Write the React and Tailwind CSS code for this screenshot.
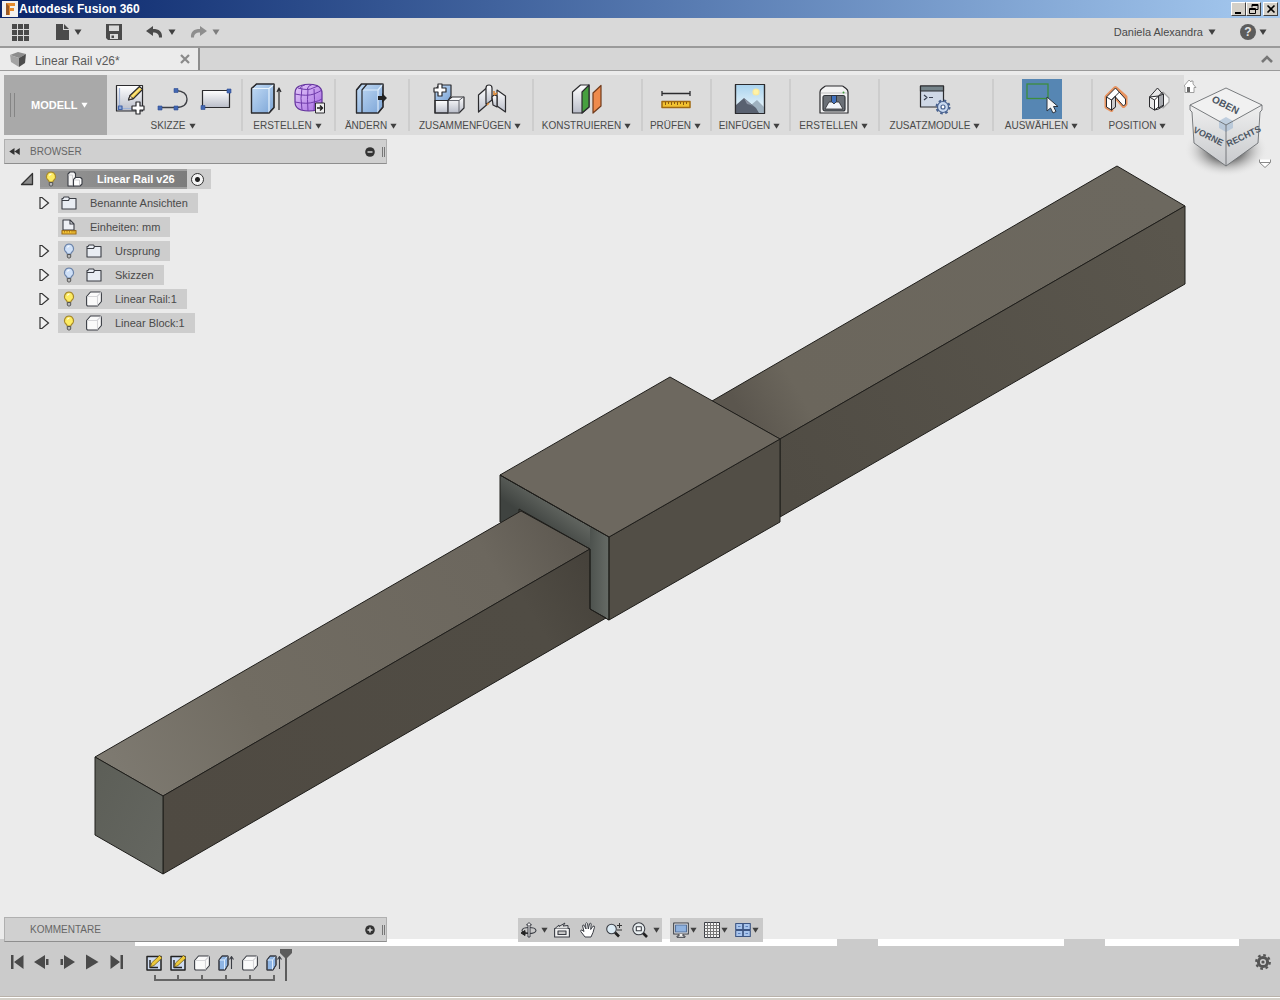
import React, { useState } from 'react';

const Caret = ({ className = 'w-2 h-[6px] text-[#404040]' }) => (
    <svg viewBox="0 0 8 6" className={className} fill="currentColor">
        <path d="M0.5 0.5h7L4 6z" />
    </svg>
);

/* ---------- ribbon icons, all on a 32px grid ---------- */

const Big = ({ children }) => (
    <svg viewBox="0 0 32 32" className="w-8 h-8 shrink-0" fill="none" stroke="#2b2b2e" strokeWidth="1.2" strokeLinejoin="round">
        <defs>
            <linearGradient id="steel" x1="0" y1="0" x2="0" y2="1">
                <stop offset="0" stopColor="#ffffff" />
                <stop offset="1" stopColor="#b9bdc9" />
            </linearGradient>
            <linearGradient id="azure" x1="0" y1="0" x2="1" y2="1">
                <stop offset="0" stopColor="#c3dcf6" />
                <stop offset="1" stopColor="#7ba4d6" />
            </linearGradient>
            <linearGradient id="violet" x1="0" y1="0" x2="1" y2="1">
                <stop offset="0" stopColor="#e6cdfb" />
                <stop offset="1" stopColor="#a468e0" />
            </linearGradient>
            <linearGradient id="sky" x1="0" y1="0" x2="0" y2="1">
                <stop offset="0" stopColor="#a9d3ee" />
                <stop offset="1" stopColor="#f2fafd" />
            </linearGradient>
        </defs>
        {children}
    </svg>
);

const SketchIcon = () => (
    <Big>
        <rect x="2.5" y="2.5" width="26" height="25.5" fill="url(#steel)" />
        <path d="M5.5 5v20.5H20" stroke="#9fb3d8" />
        <rect x="4.5" y="23" width="3.500" height="3.500" fill="#8fa9d8" stroke="#3f62a8" />
        <path d="M14.5 17l1.500-4.500 9.500-9 3 3-9.500 9.500z" fill="#f5d24c" />
        <path d="M14.5 17l1.500-4.500 3 3z" fill="#f6e3c0" strokeWidth="1" />
        <path d="M17.500 14l9-9" stroke="#fff3b5" strokeWidth="1" />
        <path d="M22 19h4v4h4v4h-4v4h-4v-4h-4v-4h4z" fill="#fff" />
    </Big>
);

const LineIcon = () => (
    <Big>
        <path d="M3 24.500h16c7 0 11-3 11-8.500S26 8 19 7.500" stroke="#3d3f44" strokeWidth="1.300" />
        <g fill="#4267b2" stroke="#2f4f94" strokeWidth=".6">
            <rect x="1" y="23" width="4" height="4" />
            <rect x="17" y="23" width="4" height="4" />
            <rect x="17" y="5.500" width="4" height="4" />
        </g>
    </Big>
);

const RectIcon = () => (
    <Big>
        <rect x="2.5" y="7.5" width="27" height="17" fill="url(#steel)" />
        <g fill="#4267b2" stroke="#2f4f94" strokeWidth=".6">
            <rect x="1" y="22.5" width="4" height="4" />
            <rect x="27" y="6" width="4" height="4" />
        </g>
    </Big>
);

const ExtrudeIcon = () => (
    <Big>
        <path d="M1.5 5.500l5-4.500H24v23.500L19 30H1.500z" fill="url(#azure)" />
        <path d="M2 5.500h17l5-4M19 5.500V30" stroke="#e8f3fd" />
        <path d="M1.5 5.500l5-4.500H24v23.500L19 30H1.500z" />
        <path d="M29 27V6m-2 3l2-4 2 4" />
    </Big>
);

const FormIcon = () => (
    <Big>
        <path d="M8 2.500Q16 0 24 2.500Q29 5 29 10v10q0 5-5 7Q16 29 8 27q-6-2-6-8V10Q2 4 8 2.500z" fill="url(#violet)" stroke="#60319a" />
        <path d="M2 11q12 2.500 19 0 5-2 8-4M2 19q12 2.500 19 0 5-1 8-3M5 5q10 3 15 0l5-2M9 4.500Q7 15 9 27M15 6q-1 10 0 22M21 6q1 10 0 22M12 1.800q-5 1.500-5 4M19 1.500q-4 1-5 5" stroke="#6f3bab" strokeWidth="1" />
        <rect x="22.5" y="20" width="9" height="10" fill="#efefef" strokeWidth="1" />
        <path d="M24 25h5m-2-2.500l2.500 2.500L27 27.500" stroke="#222" strokeWidth="1.500" />
    </Big>
);

const ModifyIcon = () => (
    <Big>
        <path d="M1.5 7l5-6H28v23l-5 6H1.500z" fill="url(#azure)" />
        <path d="M7 7h16l5-6M23 7v23" stroke="#dcecfb" />
        <path d="M1.5 7l5-6H28v23l-5 6H1.500zM7 30V7l5-6" />
        <path d="M23 13h4v-3l5 5-5 5v-3h-4z" fill="#222" stroke="none" />
    </Big>
);

const AssembleIcon = () => (
    <Big>
        <path d="M2 17.500h13V30H2z" fill="url(#steel)" />
        <path d="M15 17l4-3h12v11l-5 5H15z" fill="url(#steel)" />
        <path d="M15 17.500h11l5-4M26 17.500V30M15 17.500V30" stroke="#63656c" strokeWidth="1" />
        <path d="M2 7l4-5h12v11l-3 4.500H2z" fill="url(#azure)" />
        <path d="M2 17.500V30h13" />
        <path d="M5 1h4v4h4v4H9v4H5V9H1V5h4z" fill="#fff" />
    </Big>
);

const JointIcon = () => (
    <Big>
        <path d="M2.5 12l8-7v17l-8 7z" fill="url(#steel)" />
        <path d="M10 5q0-3 3-3t3 3v12l-4 3-2 1z" fill="url(#steel)" />
        <path d="M21 7l8.500 6v16L21 23z" fill="url(#steel)" />
        <path d="M16 14q2-3 5-1v11l-4-2z" fill="url(#steel)" />
        <path d="M11 22l2-2M18 8v4M18 12l3-2" stroke="#dc8a3a" strokeWidth="1.600" />
    </Big>
);

const ConstructIcon = () => (
    <Big>
        <path d="M1.5 9l8-7H18v22l-7 6H1.500z" fill="url(#steel)" />
        <path d="M11 9l7-7v22l-7 6z" fill="#47a03f" />
        <path d="M22 10l8-7.500V23l-8 7z" fill="#ee8a4c" stroke="#713b1c" />
    </Big>
);

const MeasureIcon = () => (
    <Big>
        <path d="M2 10.500h28M2 8v5M30 8v5" strokeWidth="1.300" />
        <rect x="2" y="18.5" width="28" height="6" fill="#f2c230" stroke="#a06a12" strokeWidth="1.500" />
        <path d="M5.5 19v3M8.500 19v2M11.500 19v3M14.500 19v2M17.500 19v3M20.500 19v2M23.500 19v3M26.500 19v2" stroke="#8a5a10" strokeWidth="1" />
    </Big>
);

const InsertIcon = () => (
    <Big>
        <rect x="1.5" y="1.5" width="29" height="29" fill="url(#sky)" />
        <circle cx="22" cy="9" r="3" fill="#fff3a8" stroke="#fbe89b" />
        <path d="M12 26l11-9 7 7v6H12z" fill="#9fb1bf" stroke="none" />
        <path d="M2 22l8-7 12 10 3 5H2z" fill="#596170" stroke="none" />
        <path d="M10 15l3 6 4 1 3 2-10-9z" fill="#8a93a2" stroke="none" />
        <rect x="1.5" y="1.5" width="29" height="29" />
    </Big>
);

const PrintIcon = () => (
    <Big>
        <path d="M2 9Q2 7 4 5.500L6 4q1-1 2-1h16q1 0 2 1l2 1.500Q30 7 30 9v21H2z" fill="#f3f3f3" />
        <path d="M3 10h26" stroke="#c9c9c9" />
        <rect x="5" y="12.5" width="22" height="15.5" rx="2" fill="#6b7077" stroke="#33363b" />
        <path d="M7 26l4-7h10l4 7z" fill="#f2f5f9" strokeWidth=".8" />
        <path d="M13.5 12.500h5v6L16 21l-2.500-2.500z" fill="#3f70bd" strokeWidth=".8" />
        <circle cx="25.5" cy="9.5" r="1" fill="#3f9b3b" stroke="none" />
    </Big>
);

const AddinIcon = () => (
    <Big>
        <rect x="1.5" y="3" width="23" height="21" fill="#cfd8e6" />
        <rect x="1.5" y="3" width="23" height="5" fill="#75848a" />
        <path d="M5 12l3 2.500L5 17M10 14.500h4" stroke="#3b4252" strokeWidth="1.200" />
        <circle cx="24" cy="24" r="5.5" fill="#c9d9f0" stroke="#49628f" />
        <circle cx="24" cy="24" r="6.5" stroke="#49628f" strokeWidth="2" strokeDasharray="2.550 2.550" />
        <circle cx="24" cy="24" r="2" fill="#fff" stroke="#49628f" />
    </Big>
);

const SelectIcon = () => (
    <span className="w-10 h-10 bg-[#5686b3] flex items-center justify-center">
        <svg viewBox="0 0 40 40" className="w-10 h-10" fill="none">
            <rect x="5" y="5" width="21" height="14.5" stroke="#3d8d3e" strokeWidth="1.300" />
            <path d="M25 18v14l3.500-3 2.500 5 3-1.500-2.500-5h4.500z" fill="#f4f4f4" stroke="#2b3440" />
        </svg>
    </span>
);

const CaptureIcon = () => (
    <Big>
        <path d="M6.5 14l9-9 10 9v7l-2 2-8-9-4 4v9l-5-3z" stroke="#e8925e" strokeWidth="4" />
        <path d="M6.5 14l9-9 10 11v5l-2 2-8-9v10l-4 3-5-3z" fill="#fff" strokeWidth="1" />
        <path d="M11.5 17v10l4-3V13z" fill="#c9cacd" strokeWidth="1" />
        <path d="M6.5 14l5 3 8-8" strokeWidth="1" />
    </Big>
);

const RevertIcon = () => (
    <Big>
        <path d="M20 9l6 6v4l-6 6z" fill="#f6f6f6" stroke="#a8a8a8" />
        <path d="M6.5 14l8-9 6 7v11l-5 3-4 1-5-3z" fill="#e9e9e9" strokeWidth="1" />
        <path d="M6.5 14l5 3v10l4-3V13z" fill="#fff" strokeWidth="1" />
        <path d="M15.5 13l5-2v11l-5 3z" fill="#a9abb0" strokeWidth="1" />
        <path d="M11.5 17l8-8" strokeWidth="1" />
    </Big>
);

const GROUPS = [
    { name: 'SKIZZE', width: 'w-[134px]', icons: [['Skizze erstellen', SketchIcon], ['Linie', LineIcon], ['Rechteck', RectIcon]] },
    { name: 'ERSTELLEN', width: 'w-[93px]', icons: [['Extrusion', ExtrudeIcon], ['Form', FormIcon]] },
    { name: 'ÄNDERN', width: 'w-[74px]', icons: [['Drücken/Ziehen', ModifyIcon]] },
    { name: 'ZUSAMMENFÜGEN', width: 'w-[124px]', icons: [['Neue Komponente', AssembleIcon], ['Gelenk', JointIcon]] },
    { name: 'KONSTRUIEREN', width: 'w-[109px]', icons: [['Versatzebene', ConstructIcon]] },
    { name: 'PRÜFEN', width: 'w-[69px]', icons: [['Messen', MeasureIcon]] },
    { name: 'EINFÜGEN', width: 'w-[79px]', icons: [['Bild', InsertIcon]] },
    { name: 'ERSTELLEN', width: 'w-[89px]', icons: [['3D-Druck', PrintIcon]] },
    { name: 'ZUSATZMODULE', width: 'w-[114px]', icons: [['Skripte', AddinIcon]] },
    { name: 'AUSWÄHLEN', width: 'w-[99px]', icons: [['Auswahl', SelectIcon]] },
    { name: 'POSITION', width: 'w-[93px]', icons: [['Position erfassen', CaptureIcon], ['Zurücksetzen', RevertIcon]] }
];

/* ---------- small icons, 16px grid ---------- */

const Small = ({ children }) => (
    <svg viewBox="0 0 16 16" className="w-4 h-4 shrink-0" fill="none" stroke="#3a3d44" strokeWidth="1.1" strokeLinejoin="round">
        {children}
    </svg>
);

const Bulb = ({ on }) => (
    <Small>
        <path
            d="M8 1a4.600 4.600 0 0 0-3 8c.8.8 1 1.300 1.200 2h3.600c.2-.7.4-1.200 1.200-2a4.600 4.600 0 0 0-3-8z"
            fill={on ? '#fdec62' : '#cfe0f7'}
            stroke={on ? '#a88a2c' : '#6c84aa'}
        />
        <path d="M6.5 4.500Q7 3 8.500 3" stroke="#fff" />
        <path d="M6.300 11.500h3.400v2.500L8.800 15H7.200l-.9-1z" fill="#b9b9b9" stroke="#555" strokeWidth="1" />
    </Small>
);

const Folder = () => (
    <Small>
        <path d="M1 14V3.500h1L3 2h4.500l1 1.500H15V14z" fill="#e9edf3" />
        <path d="M1 5.500h6.500l1-2" />
    </Small>
);

const Units = () => (
    <Small>
        <path d="M2 11V1h7l4 4v6z" fill="#eef0f4" />
        <path d="M9 1v4h4" />
        <rect x="1" y="11.5" width="14" height="3.5" fill="#f4c335" stroke="#9c6c18" />
        <path d="M3.5 12v1.500M6 12v1.500M8.500 12v1.500M11 12v1.500M13 12v1.500" stroke="#9c6c18" strokeWidth=".8" />
    </Small>
);

const Body = () => (
    <Small>
        <path d="M.6 5.500L4.500 1H14q1.400 0 1.400 1.400V10.500L11.500 15H2Q.6 15 .6 13.600z" fill="#fafafa" />
        <path d="M1.500 5.500h9.500l4-4M11.500 5.500v9" stroke="#d5d5d8" />
    </Small>
);

const Assembly = () => (
    <Small>
        <path d="M1 3l2-2h4l1.500 1.500V8L7 15H1z" fill="#f5f5f5" />
        <path d="M6.5 8.500l2-2h5L15 8v5l-2 2H6.500z" fill="#fff" />
        <path d="M1.5 4h4v10M7 9h5.500v5" stroke="#cfcfd2" strokeWidth="1" />
    </Small>
);

const FeatSketch = () => (
    <Small>
        <rect x="1" y="1.5" width="14" height="13.5" fill="#cfdcf2" stroke="#222" strokeWidth="1.500" />
        <path d="M4 5v7.500h8" stroke="#222" strokeWidth="1.400" />
        <path d="M4.5 12l1-4 8-7.500L16 3l-8 7.500z" fill="#ecc93b" stroke="#6e5a1d" strokeWidth=".8" />
    </Small>
);

const FeatExtrude = () => (
    <Small>
        <path d="M1 5l3-4h6v9l-3 5H1z" fill="#8fb5e4" />
        <path d="M1 5h5.500L10 1M6.500 5v10" stroke="#dcebfb" strokeWidth="1" />
        <path d="M1 5l3-4h6v9l-3 5H1z" strokeWidth="1" />
        <path d="M13.5 14V2.500m-2 2l2-3 2 3" />
    </Small>
);

const TREE = [
    { label: 'Benannte Ansichten', icon: Folder },
    { label: 'Einheiten: mm', icon: Units, leaf: true },
    { label: 'Ursprung', icon: Folder, bulb: 'off' },
    { label: 'Skizzen', icon: Folder, bulb: 'off' },
    { label: 'Linear Rail:1', icon: Body, bulb: 'on' },
    { label: 'Linear Block:1', icon: Body, bulb: 'on' }
];

const FEATURES = [FeatSketch, FeatSketch, Body, FeatExtrude, Body, FeatExtrude];

const PLAYER = [
    ['Zum Anfang', 'M2 1h2.500v14H2zM14.500 1v14L5 8z'],
    ['Schritt zurück', 'M11 1v14L0 8zM12 5h2.500v6H12z'],
    ['Schritt vor', 'M5 1v14l11-7zM1.500 5H4v6H1.500z'],
    ['Abspielen', 'M2 .500v15L14.500 8z'],
    ['Zum Ende', 'M1.500 1v14L11 8zM11.500 1H14v14h-2.500z']
];

function TitleBar() {
    const btn = 'w-[15px] h-[14px] bg-[#d4d0c8] border border-t-white border-l-white border-r-[#404040] border-b-[#404040] flex items-center justify-center';
    return (
        <header className="h-[18px] bg-linear-to-r from-[#0a246a] to-[#a6caf0] flex items-center px-[2px]">
            <svg viewBox="0 0 16 16" className="w-4 h-4 shrink-0">
                <rect width="16" height="16" fill="#f4f1ee" />
                <path d="M4 2h9v3H8v2h4v3H8v4H4z" fill="#e58b2f" />
                <path d="M4 2l3 3v9H4z" fill="#9b5a26" />
            </svg>
            <h1 className="text-white font-bold text-[12px] leading-4 ml-[1px]">Autodesk Fusion 360</h1>
            <div className="ml-auto flex">
                <button aria-label="Minimieren" className={btn}>
                    <svg viewBox="0 0 10 10" className="w-[10px] h-[10px]"><path d="M1 8h6v2H1z" /></svg>
                </button>
                <button aria-label="Wiederherstellen" className={btn}>
                    <svg viewBox="0 0 10 10" className="w-[10px] h-[10px]" fill="none" stroke="#000">
                        <path d="M3 3.500V.5h6v5H7M3 1.500h6M.5 4.500h6v5h-6zM.5 5.500h6" />
                    </svg>
                </button>
                <button aria-label="Schließen" className={`${btn} ml-[2px]`}>
                    <svg viewBox="0 0 10 10" className="w-[10px] h-[10px]" stroke="#000" strokeWidth="1.600">
                        <path d="M1.500 1.500l7 7M8.500 1.500l-7 7" />
                    </svg>
                </button>
            </div>
        </header>
    );
}

function QuickBar() {
    return (
        <div className="h-[30px] bg-[#d9d9d9] border-b-2 border-[#9a9a9a] flex items-center pl-3 pr-[13px] text-[#4a4a4a]">
            <button aria-label="Datengruppe">
                <svg viewBox="0 0 17 17" className="w-[17px] h-[17px]" fill="currentColor">
                    <path d="M0 0h5v5H0zM6 0h5v5H6zM12 0h5v5h-5zM0 6h5v5H0zM6 6h5v5H6zM12 6h5v5h-5zM0 12h5v5H0zM6 12h5v5H6zM12 12h5v5h-5z" />
                </svg>
            </button>
            <button aria-label="Datei" className="flex items-center gap-[5px] ml-[27px]">
                <svg viewBox="0 0 13 16" className="w-[13px] h-4" fill="currentColor">
                    <path d="M0 0h7v6h6v10H0zM8 0l5 5H8z" />
                </svg>
                <Caret />
            </button>
            <button aria-label="Speichern" className="ml-6">
                <svg viewBox="0 0 16 16" className="w-4 h-4" fill="currentColor" fillRule="evenodd">
                    <path d="M0 0h16v16H2l-2-2zM3 1.500V7h10V1.500zM4 10v5h8v-5zM5.500 11.500H8V14H5.500z" />
                </svg>
            </button>
            <button aria-label="Rückgängig" className="flex items-center gap-[5px] ml-6">
                <svg viewBox="0 0 17 14" className="w-[17px] h-[14px]" fill="currentColor">
                    <path d="M0 6l7-5v3c6 0 9.500 2.500 9 8.500h-3c0-3.500-2-5-6-5V11z" />
                </svg>
                <Caret />
            </button>
            <button aria-label="Wiederholen" className="flex items-center gap-[5px] ml-[14px]">
                <svg viewBox="0 0 17 14" className="w-[17px] h-[14px]" fill="#8e8e8e">
                    <path d="M17 6l-7-5v3c-6 0-9.500 2.500-9 8.500h3c0-3.500 2-5 6-5V11z" />
                </svg>
                <Caret className="w-2 h-[6px] text-[#7d7d7d]" />
            </button>
            <button className="ml-auto flex items-center gap-[5px] text-[11px] leading-4">
                Daniela Alexandra
                <Caret />
            </button>
            <button aria-label="Hilfe" className="flex items-center gap-[3px] ml-6">
                <span className="w-4 h-4 rounded-full bg-[#5c5c5c] text-[#e2e2e2] font-bold text-[12px] leading-4 text-center">?</span>
                <Caret />
            </button>
        </div>
    );
}

function DocumentTabs() {
    return (
        <div className="h-[23px] bg-[#d6d6d6] border-b border-[#9a9a9a] flex text-[#5a5a5a]">
            <div className="w-[200px] bg-[#ebebeb] border-r-2 border-[#8e8e8e] flex items-center pl-[9px] pr-2">
                <svg viewBox="0 0 18 16" className="w-[18px] h-4 shrink-0">
                    <path d="M1 4l8-3 8 2-7 4z" fill="#8c8c8c" />
                    <path d="M1 4l9 3v9l-8-5z" fill="#a3a3a3" />
                    <path d="M10 7l7-4-1 9-6 4z" fill="#4d4d4d" />
                </svg>
                <a href="#linear-rail" className="text-[12px] leading-4 ml-2 pt-[3px]">Linear Rail v26*</a>
                <button aria-label="Tab schließen" className="ml-auto">
                    <svg viewBox="0 0 10 10" className="w-[10px] h-[10px]" stroke="#8a8a8a" strokeWidth="2.200">
                        <path d="M1 1l8 8M9 1L1 9" />
                    </svg>
                </button>
            </div>
            <button aria-label="Werkzeugkasten einklappen" className="ml-auto mr-[7px]">
                <svg viewBox="0 0 12 8" className="w-3 h-2" fill="none" stroke="#777" strokeWidth="2.600">
                    <path d="M1 7l5-5 5 5" />
                </svg>
            </button>
        </div>
    );
}

function Ribbon() {
    return (
        <div className="flex h-[60px] w-fit bg-[#dcdcdc] text-[#4a4a4a]">
            <button className="w-[103px] shrink-0 bg-[#a9a9a9] flex items-center pl-[6px]">
                <span className="w-[5px] h-6 border-x border-[#858585]" />
                <span className="text-white font-bold text-[11px] leading-4 ml-4">MODELL</span>
                <Caret className="w-[7px] h-[6px] text-white ml-1" />
            </button>
            {GROUPS.map((group, i) => (
                <div key={i} className={`${group.width} shrink-0 flex pt-1`}>
                    {i > 0 && <span className="w-[2px] h-[52px] bg-[#cdcdcd]" />}
                    <div className="flex-1 -ml-[2px] flex flex-col items-center">
                        <div className="h-10 flex items-center gap-[11px]">
                            {group.icons.map(([title, Icon]) => (
                                <button key={title} aria-label={title} title={title}>
                                    <Icon />
                                </button>
                            ))}
                        </div>
                        <button className="flex items-center gap-[3px] text-[10px] leading-[14px] whitespace-nowrap">
                            {group.name}
                            <Caret className="w-[7px] h-[6px] text-[#404040]" />
                        </button>
                    </div>
                </div>
            ))}
        </div>
    );
}

function ViewCube() {
    return (
        <div className="absolute right-0 top-1 w-24">
            <svg viewBox="1184 75 96 108" className="w-full" fontFamily="'Liberation Sans', Arial, sans-serif">
                <defs>
                    <radialGradient id="cubeShadow">
                        <stop offset=".4" stopColor="#6a6a6a" stopOpacity=".9" />
                        <stop offset="1" stopColor="#ebebeb" stopOpacity="0" />
                    </radialGradient>
                    <linearGradient id="cubeSide" x1="0" y1="0" x2="0" y2="1">
                        <stop offset="0" stopColor="#efefef" />
                        <stop offset="1" stopColor="#c8cacd" />
                    </linearGradient>
                </defs>
                <ellipse cx="1226" cy="150" rx="42" ry="27" fill="url(#cubeShadow)" />
                <path d="M1184 86l5-6 2 2v-1h2v3l3 3.500h-2v5h-9v-6z" fill="#fff" stroke="#8a8a8a" strokeWidth=".8" />
                <path d="M1187 87h3v5h-3z" fill="#666" />
                <path d="M1190 105l36-17 36 17-36 20z" fill="#f1f1f1" />
                <path d="M1190 105l36 20v41l-32-23v-31l-4-2z" fill="url(#cubeSide)" />
                <path d="M1262 105l-36 20v41l32-23v-31l4-2z" fill="url(#cubeSide)" />
                <path d="M1219 121l7-4 7 4v7l-7 4-7-4z" fill="#a9bfd6" opacity=".7" />
                <path d="M1190 105l36-17 36 17v5l-2 2-2 31-32 23-32-23-2-31-2-2zM1190 105l36 20 36-20M1226 125v41" fill="none" stroke="#6b6e72" strokeWidth=".9" />
                <g fill="#4c5663" fontWeight="bold" fontSize="10" textAnchor="middle">
                    <text transform="translate(1224 108) rotate(27)">OBEN</text>
                    <text transform="translate(1207 139) rotate(26)" fontSize="9">VORNE</text>
                    <text transform="translate(1245 139) rotate(-26)" fontSize="9">RECHTS</text>
                </g>
                <path d="M1259.5 159.500v3l5.500 5 5.500-5v-3M1260 162.500h10" fill="#fff" stroke="#8a8a8a" />
            </svg>
        </div>
    );
}

function Model() {
    return (
        <svg viewBox="0 71 1280 868" className="absolute inset-0 w-full h-full" stroke="#1f1e1b" strokeWidth="1" strokeLinejoin="round">
            <defs>
                <linearGradient id="railTop" gradientUnits="userSpaceOnUse" x1="120" y1="790" x2="560" y2="530">
                    <stop offset="0" stopColor="#7e7a71" />
                    <stop offset=".3" stopColor="#716c62" />
                    <stop offset=".85" stopColor="#6c675e" />
                    <stop offset="1" stopColor="#5f5a52" />
                </linearGradient>
                <linearGradient id="railTopBack" gradientUnits="userSpaceOnUse" x1="745" y1="420" x2="1150" y2="186">
                    <stop offset="0" stopColor="#5b564e" />
                    <stop offset=".13" stopColor="#6b665c" />
                    <stop offset="1" stopColor="#6c685f" />
                </linearGradient>
                <linearGradient id="railSide" gradientUnits="userSpaceOnUse" x1="163" y1="840" x2="600" y2="580">
                    <stop offset="0" stopColor="#4f4a42" />
                    <stop offset=".85" stopColor="#504c44" />
                    <stop offset="1" stopColor="#46423b" />
                </linearGradient>
                <linearGradient id="railSideBack" gradientUnits="userSpaceOnUse" x1="780" y1="480" x2="1185" y2="245">
                    <stop offset="0" stopColor="#504c44" />
                    <stop offset="1" stopColor="#5a564d" />
                </linearGradient>
                <linearGradient id="endFace" x1="0" y1="0" x2="1" y2="1">
                    <stop offset="0" stopColor="#5c5e57" />
                    <stop offset="1" stopColor="#656761" />
                </linearGradient>
                <linearGradient id="blockFace" gradientUnits="userSpaceOnUse" x1="560" y1="509" x2="545" y2="530">
                    <stop offset="0" stopColor="#5f635e" />
                    <stop offset="1" stopColor="#3f4340" />
                </linearGradient>
                <linearGradient id="blockLeg" gradientUnits="userSpaceOnUse" x1="590" y1="0" x2="609" y2="0">
                    <stop offset="0" stopColor="#4d524e" />
                    <stop offset="1" stopColor="#666b66" />
                </linearGradient>
            </defs>
            {/* rail behind the block */}
            <path d="M712 401L1117 166L1185 206L780 439z" fill="url(#railTopBack)" />
            <path d="M1185 206V284L780 517V439z" fill="url(#railSideBack)" />
            {/* block */}
            <path d="M500 475L609 537V620L590 609V549L540 540L500 522z" fill="url(#blockFace)" />
            <path d="M590 527L609 537V620L590 609z" fill="url(#blockLeg)" stroke="none" />
            <path d="M609 537L780 439V522L609 620z" fill="#524e46" />
            <path d="M500 475L670 377L780 439L609 537z" fill="#6d685f" />
            {/* rail in front */}
            <path d="M95 757L521 511L590 549L163 796z" fill="url(#railTop)" />
            <path d="M163 796L590 549V609L606 618L163 874z" fill="url(#railSide)" />
            <path d="M95 757L163 796V874L95 835z" fill="url(#endFace)" />
            <path d="M500 475L609 537V620L590 609V549L519 509V512" fill="none" />
        </svg>
    );
}

function Browser() {
    const [open, setOpen] = useState(true);

    return (
        <aside className="w-[383px] text-[#4a4a4a]">
            <div className="h-[25px] bg-[#d0d0d0] border border-[#b0b0b0] border-b-[#8e8e8e] flex items-center pl-1 pr-px">
                <svg viewBox="0 0 12 8" className="w-[11px] h-[7px]" fill="#333"><path d="M6 0v8L0 4zM12 0v8L6 4z" /></svg>
                <h2 className="text-[10px] leading-4 text-[#666] ml-[10px]">BROWSER</h2>
                <button aria-label="Browser schließen" className="ml-auto" onClick={() => setOpen(!open)}>
                    <svg viewBox="0 0 10 10" className="w-[10px] h-[10px]">
                        <circle cx="5" cy="5" r="4.8" fill="#333" />
                        <path d="M2.5 4.300h5v1.400h-5z" fill="#ddd" />
                    </svg>
                </button>
                <span className="w-[3px] h-[10px] border-x border-[#777] ml-[7px]" />
            </div>

            {open && (
                <ul className="mt-[5px] flex flex-col gap-1 text-[11px] leading-4">
                    <li className="h-5 flex items-center pl-4">
                        <svg viewBox="0 0 14 14" className="w-[14px] h-[14px]">
                            <path d="M1.5 12.500h11v-11z" fill="#8c8c8c" stroke="#333" strokeWidth="1.300" strokeLinejoin="round" />
                        </svg>
                        <div className="h-5 ml-[6px] flex items-center bg-[#cdcdcd]">
                            <div className="w-[147px] h-5 px-[3px] flex items-center bg-linear-to-r from-[#969696] to-[#7c7c7c] border-2 border-x-0 border-[#a0a0a0]">
                                <Bulb on />
                                <span className="ml-2"><Assembly /></span>
                                <span className="font-bold text-white ml-[14px] whitespace-nowrap">Linear Rail v26</span>
                            </div>
                            <input
                                type="radio"
                                name="activeComponent"
                                aria-label="Komponente aktivieren"
                                defaultChecked
                                className="appearance-none w-[13px] h-[13px] rounded-full border border-[#333] bg-[radial-gradient(circle,#222_0_2px,#f4f4f4_3px)] ml-1 mr-[7px]"
                            />
                        </div>
                    </li>
                    {TREE.map(({ label, icon: Icon, bulb, leaf }) => (
                        <li key={label} className="h-5 flex items-center pl-[34px]">
                            <span className="w-5 flex">
                                {!leaf && (
                                    <svg viewBox="0 0 12 14" className="w-3 h-[14px]">
                                        <path d="M2 1.500V12.500h2L10.500 7L4 1.500z" fill="#f2f2f2" stroke="#333" strokeWidth="1.200" />
                                    </svg>
                                )}
                            </span>
                            <div className="h-5 pl-[3px] pr-[10px] flex items-center bg-[#cdcdcd]">
                                {bulb && <span className="mr-[9px]"><Bulb on={bulb === 'on'} /></span>}
                                <Icon />
                                <span className="ml-[13px]">{label}</span>
                            </div>
                        </li>
                    ))}
                </ul>
            )}
        </aside>
    );
}

function NavBar() {
    const tool = 'w-[26px] flex items-center justify-center';
    const small = 'w-[7px] h-[6px] text-[#404040]';
    return (
        <div className="flex gap-2">
            <div className="h-6 bg-[#c9c9c9] flex">
                <button aria-label="Orbit" className="w-[31px] pl-[3px] flex items-center gap-1">
                    <Small>
                        <ellipse cx="8" cy="8.5" rx="7" ry="3" />
                        <path d="M7 15V3H5.500L8 .5 10.500 3H9v12z" fill="#f5f5f5" strokeWidth="1" />
                        <path d="M0 11l4-2.500v5zM4 11h3" fill="#222" stroke="#222" strokeWidth="1" />
                    </Small>
                    <Caret className={small} />
                </button>
                <button aria-label="Ansicht von" className={tool}>
                    <Small>
                        <path d="M.6 6.500h14.800V15H.6z" fill="#f1f1f1" />
                        <path d="M4 9h8v3.500H4z" fill="#c7c7c7" />
                        <path d="M1 6.500L5 3v1.500L11 1 9 4l5-.5v3" fill="#ddd" strokeWidth="1" />
                    </Small>
                </button>
                <button aria-label="Pan" className={tool}>
                    <Small>
                        <path d="M5 15L.8 9.500q-.5-1.500 1-1.500L4 9.500 2.600 4Q2.800 2.300 4.200 3.300L6 7 5.600 1.600Q6.400 0 7.500 1.500L8.300 7 9.600 1.600Q10.700.4 11.200 2L10.700 7.500 13 4.200q1.600-.8 1.500 1L13 10.500 11 15z" fill="#fff" strokeWidth="1" />
                    </Small>
                </button>
                <button aria-label="Zoom" className={tool}>
                    <Small>
                        <path d="M9 10.500l4 4" stroke="#222" strokeWidth="2.600" />
                        <circle cx="5.5" cy="7" r="4.8" fill="#dcebf4" />
                        <path d="M11 3.500h5M13.500 1v5M11 8h5" stroke="#333" strokeWidth="1" />
                    </Small>
                </button>
                <button aria-label="Einpassen" className="w-[35px] pl-[5px] flex items-center gap-[5px]">
                    <Small>
                        <path d="M11 11l4 4" stroke="#222" strokeWidth="2.600" />
                        <circle cx="6.8" cy="6.8" r="6" fill="#e8eef0" />
                        <rect x="4.300" y="4.8" width="5" height="4" fill="#fff" />
                    </Small>
                    <Caret className={small} />
                </button>
            </div>
            <div className="h-6 bg-[#c9c9c9] flex">
                <button aria-label="Anzeigeeinstellungen" className="w-[31px] pl-[3px] flex items-center gap-px">
                    <Small>
                        <rect x=".7" y="1" width="14.6" height="11" fill="#f1f1f1" />
                        <rect x="2.5" y="3" width="11" height="7" fill="#8fb2df" stroke="#54709a" />
                        <path d="M6 12v2H4v1.300h8V14h-2v-2" fill="#eee" strokeWidth="1" />
                    </Small>
                    <Caret className={small} />
                </button>
                <button aria-label="Raster" className="w-[31px] pl-[3px] flex items-center gap-px">
                    <Small>
                        <path d="M.5 .5h15v15H.5z" fill="#f4f4f4" strokeWidth="1" />
                        <path d="M3.5 .5v15M6.500 .5v15M9.500 .5v15M12.500 .5v15M.5 3.500h15M.5 6.500h15M.5 9.500h15M.5 12.500h15" stroke="#777" strokeWidth="1" />
                    </Small>
                    <Caret className={small} />
                </button>
                <button aria-label="Ansichtsfenster" className="w-[31px] pl-[3px] flex items-center gap-px">
                    <Small>
                        <path d="M.7 1.500h7v6h-7zM8.300 1.500h7v6h-7zM.7 8.500h7v6h-7zM8.300 8.500h7v6h-7z" fill="#a9c5ec" stroke="#3d5683" />
                        <path d="M3 4.500h2.500M10.500 4.500H13M3 11.500h2.500M10.500 11.500H13" stroke="#5e83bd" />
                    </Small>
                    <Caret className={small} />
                </button>
            </div>
        </div>
    );
}

function Comments() {
    return (
        <div className="w-[383px] h-[25px] bg-[#d0d0d0] border border-[#b0b0b0] border-b-[#8e8e8e] flex items-center pl-[25px] pr-px">
            <h2 className="text-[10px] leading-4 text-[#666]">KOMMENTARE</h2>
            <button aria-label="Kommentare öffnen" className="ml-auto">
                <svg viewBox="0 0 10 10" className="w-[10px] h-[10px]">
                    <circle cx="5" cy="5" r="4.8" fill="#333" />
                    <path d="M2.5 4.300h5v1.400h-5zM4.300 2.500h1.400v5H4.300z" fill="#ddd" />
                </svg>
            </button>
            <span className="w-[3px] h-[10px] border-x border-[#777] ml-[7px]" />
        </div>
    );
}

function Timeline() {
    return (
        <footer className="bg-[#cbcbcb] border-b-2 border-[#d4d0c8]">
            <div className="h-[7px] flex">
                <span className="w-[135px]" />
                <span className="flex-[702] bg-white" />
                <span className="flex-[41]" />
                <span className="flex-[186] bg-white" />
                <span className="flex-[41]" />
                <span className="flex-[134] bg-white" />
                <span className="w-[41px]" />
            </div>
            <div className="h-[50px] flex">
                <div className="w-[135px] pt-2 pl-[9px] flex gap-[9px] items-start text-[#4a4a4a]">
                    {PLAYER.map(([name, d]) => (
                        <button key={name} aria-label={name}>
                            <svg viewBox="0 0 16 16" className="w-4 h-4" fill="currentColor"><path d={d} /></svg>
                        </button>
                    ))}
                </div>
                <div className="pl-[7px] pt-[3px] flex">
                    <div className="pt-[6px]">
                        <div className="flex">
                            {FEATURES.map((Icon, i) => (
                                <button key={i} aria-label={`Element ${i + 1}`} className="w-6 flex justify-center">
                                    <Icon />
                                </button>
                            ))}
                        </div>
                        <svg viewBox="0 0 144 6" className="w-36 h-[6px] mt-1" fill="none" stroke="#666" strokeWidth="2">
                            <path d="M13 0v5h119V0M36 0v5M60 0v5M84 0v5M108 0v5" />
                        </svg>
                    </div>
                    <svg viewBox="0 0 14 32" className="w-[14px] h-8 -ml-[7px]" fill="#5c5c5c">
                        <path d="M1 0h12v4L8 9v23H6V9L1 4z" />
                    </svg>
                </div>
                <button aria-label="Einstellungen" className="ml-auto mr-[9px] mt-2 self-start">
                    <svg viewBox="0 0 16 16" className="w-4 h-4" fill="none" stroke="#555">
                        <circle cx="8" cy="8" r="4.6" strokeWidth="3" />
                        <circle cx="8" cy="8" r="6.8" strokeWidth="2.200" strokeDasharray="2.670 2.670" />
                        <circle cx="8" cy="8" r="1.6" fill="#555" stroke="none" />
                    </svg>
                </button>
            </div>
            <div className="h-[2px] border-b border-white bg-[#b9b2aa]" />
        </footer>
    );
}

export default function App() {
    return (
        <div className="min-h-screen flex flex-col bg-[#ebebeb] font-['Liberation_Sans',Arial,sans-serif]">
            <TitleBar />
            <QuickBar />
            <DocumentTabs />

            <main className="relative flex-1 flex flex-col">
                <Model />
                <div className="relative flex-1 flex flex-col items-start pl-1 pt-1 gap-1">
                    <Ribbon />
                    <Browser />
                </div>
                <ViewCube />
                {/* bottom row reaches a little into the timeline */}
                <div className="relative z-10 grid grid-cols-[1fr_auto_1fr] items-end -mb-[3px]">
                    <div className="pl-1">
                        <Comments />
                    </div>
                    <NavBar />
                </div>
            </main>

            <Timeline />
        </div>
    );
}
